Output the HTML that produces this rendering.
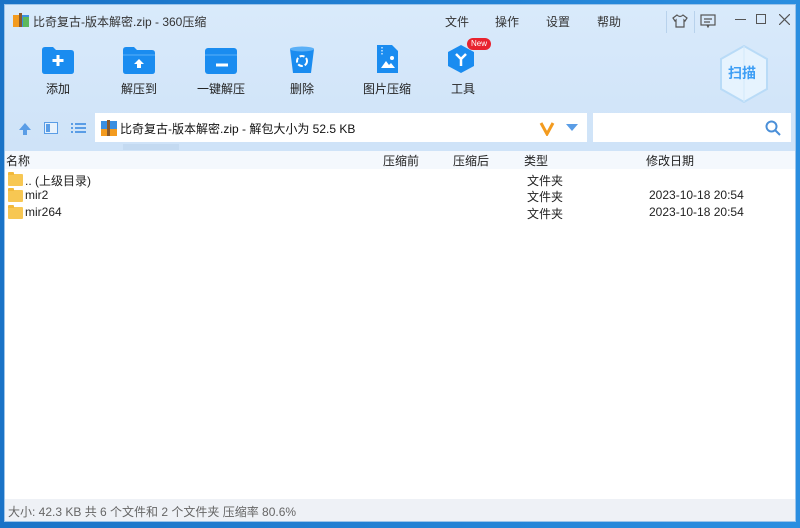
<!DOCTYPE html><html><head><meta charset="utf-8"><style>
*{margin:0;padding:0;box-sizing:border-box}
body{width:800px;height:528px;background:linear-gradient(90deg,#1a73c7,#2a8ee0);position:relative;overflow:hidden;font-family:"Liberation Sans","Noto Sans CJK SC",sans-serif;font-size:12px;color:#222}
.win{position:absolute;left:4px;top:4px;width:792px;height:518px;background:linear-gradient(#d9eafb,#cfe3f8 140px);border:1px solid #9cc4ea}
.t{position:absolute;white-space:nowrap}
.menu{color:#333;font-size:12px;top:8px}
.tb{position:absolute;top:41px;width:80px;text-align:center;font-size:12px;color:#222}
.tb svg{display:block;margin:0 auto 6px}
.list{position:absolute;left:0;top:146px;width:790px;height:348px;background:#fff}
.hdr{position:absolute;left:0;top:0;width:790px;height:18px;background:#f4f8fd}
.fold{position:absolute;width:15px;height:12px;background:#f7c753;border-radius:1px}
.fold:before{content:"";position:absolute;left:0;top:-2px;width:6px;height:3px;background:#f2b93a;border-radius:1px 1px 0 0}
.status{position:absolute;left:0;top:494px;width:790px;height:22px;background:#eef1f6;color:#666;font-size:12px;padding:4px 3px}
</style></head><body>
<div class="win">
<svg class="t" style="left:8px;top:8px" width="16" height="14"><rect x="0" y="2" width="16" height="12" fill="#3b8fe0"/><rect x="0" y="2" width="6" height="12" fill="#f39b1f"/><rect x="6" y="0" width="3" height="14" fill="#8b5a2b"/><rect x="10" y="4" width="6" height="10" fill="#5cb85c"/></svg>
<div class="t" style="left:28px;top:8px;font-size:12px;color:#333">比奇复古-版本解密.zip - 360压缩</div>
<div class="t menu" style="left:440px">文件</div>
<div class="t menu" style="left:490px">操作</div>
<div class="t menu" style="left:541px">设置</div>
<div class="t menu" style="left:592px">帮助</div>
<div class="t" style="left:661px;top:6px;width:1px;height:22px;background:#b8d2ec"></div>
<div class="t" style="left:689px;top:6px;width:1px;height:22px;background:#b8d2ec"></div>
<svg class="t" style="left:667px;top:9px" width="16" height="14" fill="none" stroke="#555" stroke-width="1.2"><path d="M5 1 L1 4 L3 7 L4 6 V13 H12 V6 L13 7 L15 4 L11 1 Q8 4 5 1Z"/></svg>
<svg class="t" style="left:695px;top:9px" width="16" height="14" fill="none" stroke="#555" stroke-width="1.2"><rect x="1" y="1" width="14" height="10"/><path d="M4 5H12M4 8H10M7 11L8 13L9 11"/></svg>
<div class="t" style="left:730px;top:14px;width:11px;height:1px;background:#555"></div>
<div class="t" style="left:751px;top:9px;width:10px;height:10px;border:1.2px solid #555"></div>
<svg class="t" style="left:774px;top:9px" width="11" height="11" stroke="#555" stroke-width="1.2"><path d="M0 0L11 11M11 0L0 11"/></svg>

<div class="tb" style="left:13px"><svg width="34" height="28"><path d="M1 4Q1 1 4 1H12L15 4H30Q33 4 33 7V25Q33 28 30 28H4Q1 28 1 25Z" fill="#1a8cf0"/><path d="M17 9V20M11.5 14.5H22.5" stroke="#fff" stroke-width="3"/></svg>添加</div>
<div class="tb" style="left:94px"><svg width="34" height="28"><path d="M1 4Q1 1 4 1H12L15 4H30Q33 4 33 7V25Q33 28 30 28H4Q1 28 1 25Z" fill="#1a8cf0"/><path d="M1 9H33" stroke="#5ab0f7"/><path d="M17 13L12 18H15V22H19V18H22Z" fill="#fff"/></svg>解压到</div>
<div class="tb" style="left:176px"><svg width="34" height="28"><rect x="1" y="2" width="32" height="26" rx="3" fill="#1a8cf0"/><path d="M1 9H33" stroke="#5ab0f7"/><path d="M12 19H24" stroke="#fff" stroke-width="3"/></svg>一键解压</div>
<div class="tb" style="left:257px"><svg width="34" height="28"><path d="M5 3H29L26 27H8Z" fill="#1a8cf0"/><ellipse cx="17" cy="3" rx="12" ry="2.5" fill="#5ab0f7"/><circle cx="17" cy="15" r="5" fill="none" stroke="#fff" stroke-width="2" stroke-dasharray="5 2"/></svg>删除</div>
<div class="tb" style="left:342px;top:39px"><svg width="34" height="30"><path d="M7 1H22L28 7V29H7Z" fill="#1a8cf0"/><path d="M11 24L16 17L19 21L21 19L25 24Z" fill="#fff"/><circle cx="22" cy="14" r="2" fill="#fff"/><path d="M12 3V12" stroke="#9fd0fa" stroke-dasharray="1.5 1.5" stroke-width="2"/></svg>图片压缩</div>
<div class="tb" style="left:418px;top:39px"><svg width="34" height="30"><path d="M15 1L28 8V22L15 29L2 22V8Z" fill="#1a8cf0"/><path d="M10 10L15 15L20 10M15 15V22" stroke="#fff" stroke-width="2.5" fill="none"/></svg>工具</div>
<div class="t" style="left:462px;top:33px;background:#e8232e;color:#fff;font-size:8px;padding:1px 4px;border-radius:7px;line-height:10px">New</div>
<svg class="t" style="left:713px;top:39px" width="52" height="62"><path d="M26 2L49 15V45L26 58L3 45V15Z" fill="#e6f3fe" stroke="#b9dbf7" stroke-width="2"/><path d="M26 2V58" stroke="#d2e8fb"/></svg>
<div class="t" style="left:723px;top:58px;font-size:14px;font-weight:bold;color:#3d9ef5">扫描</div>

<svg class="t" style="left:13px;top:117px" width="14" height="14"><path d="M7 1L13 8H9V13H5V8H1Z" fill="#5a9de6"/></svg>
<svg class="t" style="left:39px;top:117px" width="14" height="12"><rect x="0.5" y="0.5" width="13" height="11" fill="#e8f2fc" stroke="#5a9de6"/><rect x="2" y="2" width="4" height="8" fill="#5a9de6"/></svg>
<svg class="t" style="left:66px;top:117px" width="15" height="12" fill="#5a9de6"><rect x="0" y="1" width="2" height="2"/><rect x="4" y="1" width="11" height="2"/><rect x="0" y="5" width="2" height="2"/><rect x="4" y="5" width="11" height="2"/><rect x="0" y="9" width="2" height="2"/><rect x="4" y="9" width="11" height="2"/></svg>
<div class="t" style="left:90px;top:108px;width:492px;height:29px;background:#fff"></div>
<svg class="t" style="left:96px;top:115px" width="16" height="16"><rect x="0" y="1" width="16" height="15" fill="#3b8fe0"/><rect x="0" y="9" width="16" height="7" fill="#f39b1f"/><rect x="6" y="0" width="3" height="16" fill="#8b5a2b"/></svg>
<div class="t" style="left:115px;top:115px;font-size:12px;color:#111">比奇复古-版本解密.zip - 解包大小为 52.5 KB</div>
<svg class="t" style="left:534px;top:115px" width="16" height="16"><path d="M2 3L8 14L14 3" stroke="#f39b1f" stroke-width="3" fill="none"/></svg>
<svg class="t" style="left:561px;top:119px" width="12" height="7"><path d="M0 0H12L6 7Z" fill="#5a9de6"/></svg>
<div class="t" style="left:588px;top:108px;width:198px;height:29px;background:#fff"></div>
<svg class="t" style="left:760px;top:115px" width="16" height="16" stroke="#4a8fd8" stroke-width="2" fill="none"><circle cx="6.5" cy="6.5" r="5"/><path d="M10 10L15 15"/></svg>
<div class="t" style="left:118px;top:139px;width:56px;height:6px;background:#c4daf1"></div>

<div class="list">
<div class="hdr"></div>
<div class="t" style="left:1px;top:1px">名称</div>
<div class="t" style="left:378px;top:1px">压缩前</div>
<div class="t" style="left:448px;top:1px">压缩后</div>
<div class="t" style="left:519px;top:1px">类型</div>
<div class="t" style="left:641px;top:1px">修改日期</div>
<div class="fold" style="left:3px;top:23px"></div><div class="t" style="left:20px;top:21px">.. (上级目录)</div><div class="t" style="left:522px;top:21px">文件夹</div>
<div class="fold" style="left:3px;top:39px"></div><div class="t" style="left:20px;top:37px">mir2</div><div class="t" style="left:522px;top:37px">文件夹</div><div class="t" style="left:644px;top:37px">2023-10-18 20:54</div>
<div class="fold" style="left:3px;top:56px"></div><div class="t" style="left:20px;top:54px">mir264</div><div class="t" style="left:522px;top:54px">文件夹</div><div class="t" style="left:644px;top:54px">2023-10-18 20:54</div>
</div>
<div class="status">大小: 42.3 KB 共 6 个文件和 2 个文件夹 压缩率 80.6%</div>
</div>
</body></html>
